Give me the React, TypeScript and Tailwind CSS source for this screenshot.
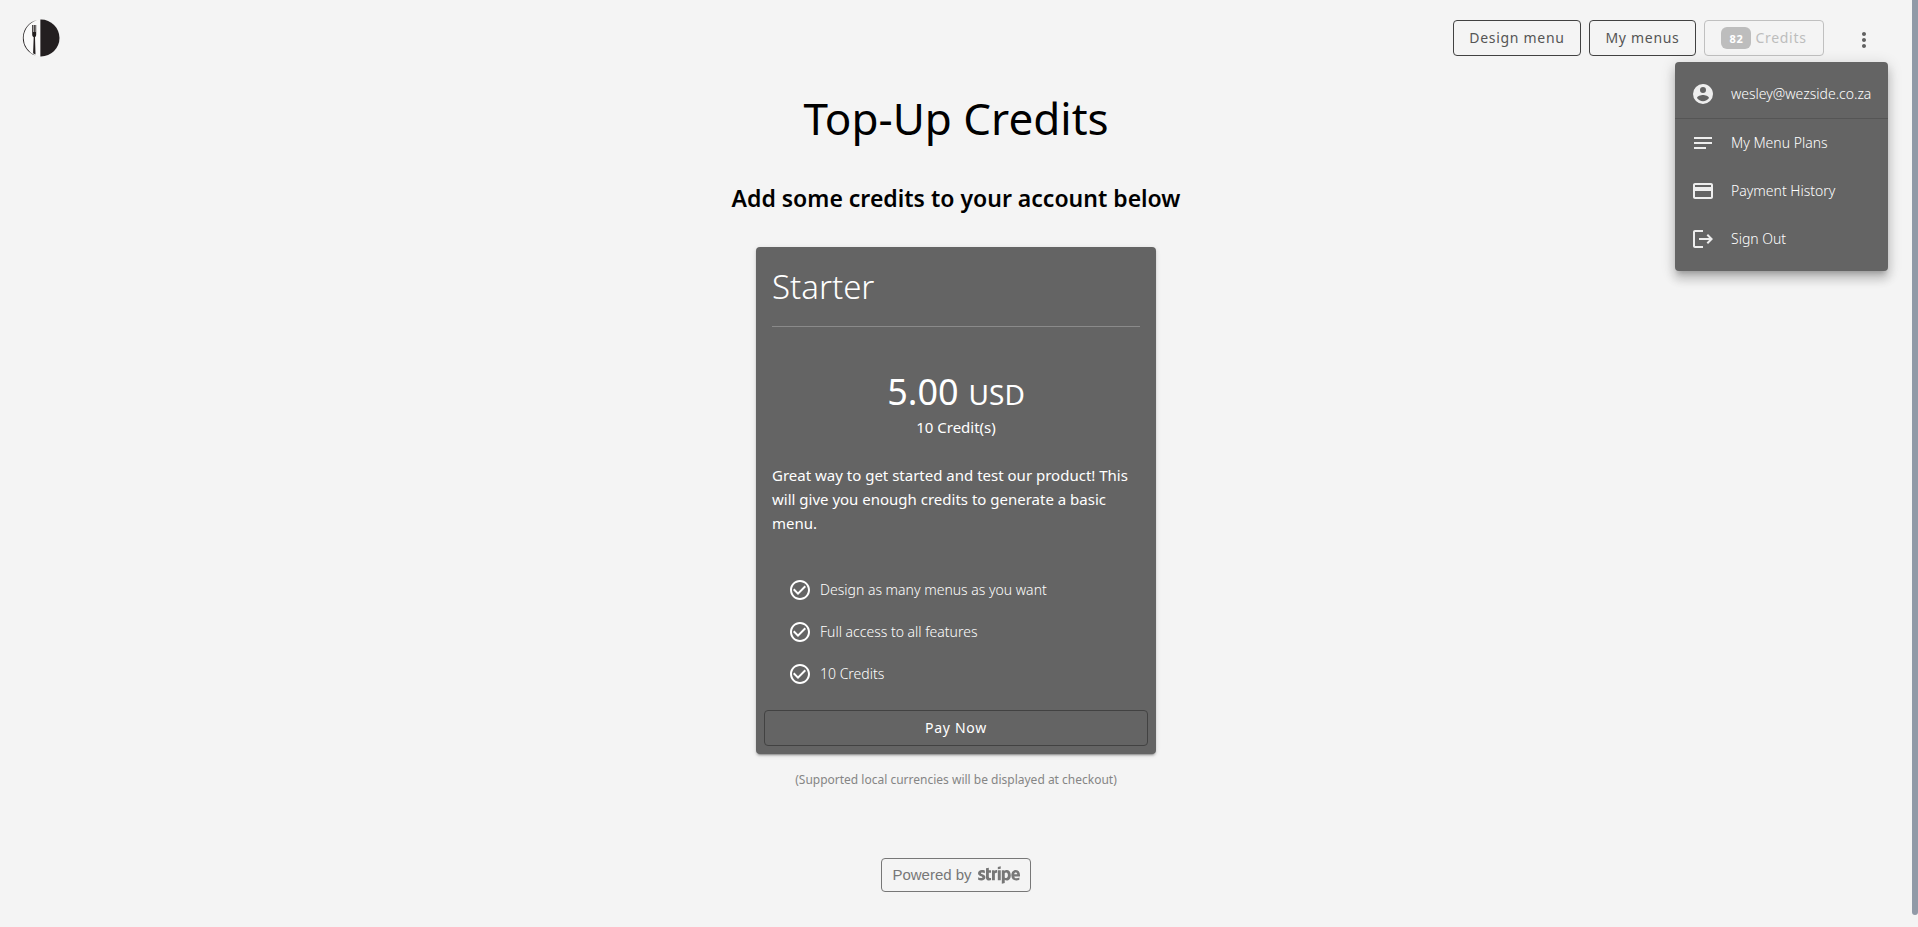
import { FaStripe } from "react-icons/fa";
import { MdCheckCircleOutline, MdMoreVert, MdNotes } from "react-icons/md";

const iconPaths = {
  account:
    "M12,19.2C9.5,19.2 7.29,17.92 6,16C6.03,14 10,12.9 12,12.9C14,12.9 17.97,14 18,16C16.71,17.92 14.5,19.2 12,19.2M12,5A3,3 0 0,1 15,8A3,3 0 0,1 12,11A3,3 0 0,1 9,8A3,3 0 0,1 12,5M12,2A10,10 0 0,0 2,12A10,10 0 0,0 12,22A10,10 0 0,0 22,12C22,6.47 17.5,2 12,2Z",
  card: "M20,8H4V6H20M20,18H4V12H20M20,4H4C2.89,4 2,4.89 2,6V18C2,19.11 2.9,20 4,20H20C21.11,20 22,19.11 22,18V6C22,4.89 21.1,4 20,4Z",
  logout:
    "M17 7L15.59 8.41L18.17 11H8V13H18.17L15.59 15.58L17 17L22 12M4 5H12V3H4C2.9 3 2 3.9 2 5V19C2 20.1 2.9 21 4 21H12V19H4V5Z",
};

function Icon({ path }: { path: string }) {
  return (
    <svg viewBox="0 0 24 24" className="size-6 shrink-0 fill-current" aria-hidden="true">
      <path d={path} />
    </svg>
  );
}

function Logo() {
  return (
    <svg viewBox="0 0 38 38" className="size-[38px]" aria-hidden="true">
      <path d="M15.5 1.2A18 18 0 0 0 13.5 36.2L18 37V1Z" fill="#fafafa" />
      <path d="M15 .9A18.6 18.6 0 0 0 13.5 36.6A19.4 19.4 0 0 1 1.6 19A19.4 19.4 0 0 1 15 .9Z" fill="#231f20" />
      <path d="M18.4 .5H19a18.5 18.5 0 0 1 0 37h-.6Z" fill="#231f20" />
      <path
        d="M10.2 6h.8v7h.6V6h1.2v7h.6V6h.8v9.5c0 1.5-.6 2.3-1.2 2.7l.5 17.3-2.4-1.3.6-16c-.8-.5-1.5-1.2-1.5-2.7Z"
        fill="#231f20"
      />
    </svg>
  );
}

const menuItems = [
  { label: "My Menu Plans", icon: <MdNotes className="size-6 shrink-0" /> },
  { label: "Payment History", icon: <Icon path={iconPaths.card} /> },
  { label: "Sign Out", icon: <Icon path={iconPaths.logout} /> },
];

const features = ["Design as many menus as you want", "Full access to all features", "10 Credits"];

function AccountMenu() {
  return (
    <nav
      aria-label="Account"
      className="absolute top-full right-0 z-10 -mt-0.5 w-[213px] rounded bg-[#646464] py-2 text-sm font-light tracking-normal whitespace-nowrap text-white shadow-[0_5px_5px_-3px_rgba(0,0,0,0.2),0_8px_10px_1px_rgba(0,0,0,0.14),0_3px_14px_2px_rgba(0,0,0,0.12)]"
    >
      <div className="flex h-12 items-center gap-4 px-4">
        <span className="text-[#eeeeee]">
          <Icon path={iconPaths.account} />
        </span>
        wesley@wezside.co.za
      </div>
      <hr className="border-[#555555]" />
      {menuItems.map((item) => (
        <a key={item.label} href="#" className="flex h-12 items-center gap-4 px-4">
          <span className="text-[#eeeeee]">{item.icon}</span>
          {item.label}
        </a>
      ))}
    </nav>
  );
}

export default function App() {
  return (
    <div className="flex min-h-screen bg-[#f4f4f4] font-['Noto_Sans',sans-serif] text-black">
      <div className="flex-1">
        <header className="flex items-center justify-between pt-3 pr-6 pl-[22px]">
          <a href="#" aria-label="Home">
            <Logo />
          </a>
          <div className="relative flex items-center gap-2 py-2 text-sm tracking-wider">
            <button className="h-9 w-32 rounded border border-[#424242] text-[#555555]">Design menu</button>
            <button className="h-9 w-[107px] rounded border border-[#424242] text-[#555555]">My menus</button>
            <button
              disabled
              className="flex h-9 w-[120px] items-center justify-center gap-1 rounded border border-[#c0c0c0] text-[#bdbdbd]"
            >
              <span className="rounded-md bg-[#bdbdbd] px-2 pt-1 pb-0.5 text-[11px] leading-4 font-bold text-white">
                82
              </span>
              Credits
            </button>
            <button aria-label="Open account menu" className="ml-2 flex w-12 justify-center pt-1 text-[#616161]">
              <MdMoreVert className="size-6" />
            </button>
            <AccountMenu />
          </div>
        </header>

        <main className="flex flex-col items-center">
          <h1 className="mt-6 text-[44px] leading-[60px]">Top-Up Credits</h1>
          <h2 className="mt-[34px] text-[23px] leading-8 font-semibold">Add some credits to your account below</h2>

          <section className="mt-[33px] w-[400px] rounded bg-[#646464] p-2 text-white shadow-[0_3px_1px_-2px_rgba(0,0,0,0.2),0_2px_2px_0_rgba(0,0,0,0.14),0_1px_5px_0_rgba(0,0,0,0.12)]">
            <div className="px-2">
              <h3 className="pt-2 pb-4 text-[33px] leading-[47px] font-light">Starter</h3>
              <hr className="border-[#8a8a8a]" />
              <p className="mt-11 flex items-baseline justify-center gap-2.5 leading-[42px]">
                <span className="text-4xl leading-[42px]">5.00</span>
                <span className="text-[28px]">USD</span>
              </p>
              <p className="text-center text-[15px] leading-6">10 Credit(s)</p>
              <p className="mt-6 text-[15px] leading-6">
                Great way to get started and test our product! This will give you enough credits to generate a basic
                menu.
              </p>
              <ul className="mt-[26px] px-4 pt-2 text-sm font-light">
                {features.map((feature) => (
                  <li key={feature} className="flex h-[42px] items-center gap-2">
                    <MdCheckCircleOutline className="size-6 shrink-0" />
                    {feature}
                  </li>
                ))}
              </ul>
            </div>
            <button className="mt-[15px] h-9 w-full rounded border border-[#424242] text-sm tracking-wider">
              Pay Now
            </button>
          </section>

          <p className="mt-4 text-xs leading-5 text-[#858585]">
            (Supported local currencies will be displayed at checkout)
          </p>
          <a
            href="#"
            className="mt-[68px] flex h-[34px] w-[150px] items-center justify-center gap-1.5 rounded border border-[#777777] font-['Liberation_Sans',sans-serif] text-[15px] text-[#777777]"
          >
            Powered by
            <FaStripe className="h-9 w-[42px]" aria-label="Stripe" />
          </a>
        </main>
      </div>
      <div className="w-1.5 pb-3">
        <div className="h-full rounded-b bg-[#919aa7]" />
      </div>
    </div>
  );
}
